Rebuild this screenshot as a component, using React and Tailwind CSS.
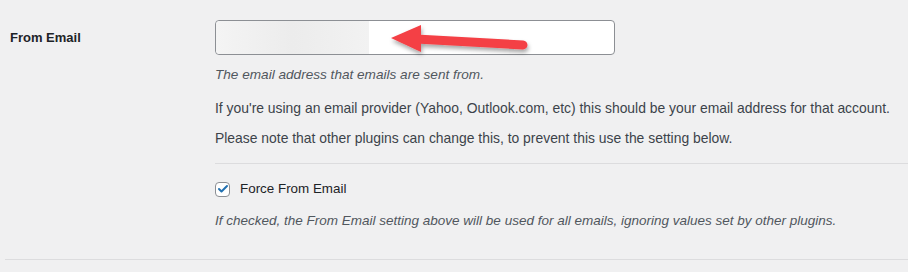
import { Check } from "lucide-react";

export default function App() {
  return (
    <div className="h-[272px] overflow-hidden bg-[#f0f0f1] font-['Liberation_Sans',Arial,sans-serif] text-[13px] text-[#3c434a]">
      <div className="flex pt-5">
        <div className="w-[215px] shrink-0 pl-[10px] pt-[8px] text-[13px] font-bold text-[#1d2327]">From Email</div>
        <div className="flex-1">
          <div className="relative h-[35px] w-[400px] overflow-visible rounded-[4px] border border-[#8c8f94] bg-white">
            <div className="absolute inset-y-0 left-0 w-[153px] rounded-l-[4px] bg-gradient-to-r from-[#f4f4f4] via-[#ececec] to-[#f2f2f2]" />
            <svg className="absolute left-[170px] top-[2px]" width="150" height="40" viewBox="0 0 150 40">
              <defs>
                <filter id="sh" x="-20%" y="-40%" width="140%" height="200%">
                  <feDropShadow dx="1" dy="3" stdDeviation="2" floodColor="#000" floodOpacity="0.35" />
                </filter>
              </defs>
              <g filter="url(#sh)">
                <line x1="30" y1="16" x2="137" y2="22" stroke="#f43f45" strokeWidth="9" strokeLinecap="round" />
                <polygon points="5,15 35,2 35,29" fill="#f43f45" />
              </g>
            </svg>
          </div>
          <p className="mt-[11px] text-[13.6px] italic leading-[18px] text-[#50575e]">The email address that emails are sent from.</p>
          <p className="mt-[15px] text-[13.9px] leading-[18px]">If you're using an email provider (Yahoo, Outlook.com, etc) this should be your email address for that account.</p>
          <p className="mt-[12px] text-[13.9px] leading-[18px]">Please note that other plugins can change this, to prevent this use the setting below.</p>
        </div>
      </div>
      <div className="ml-[215px] mt-[16px] h-px bg-[#dcdcde]" />
      <div className="ml-[215px] mt-[16px] flex items-center gap-[10px]">
        <span className="flex h-[15px] w-[15px] items-center justify-center rounded-[4px] border border-[#8c8f94] bg-white">
          <Check className="h-[12px] w-[12px] text-[#2271b1]" strokeWidth={4} />
        </span>
        <span className="text-[13.4px] leading-[18px] text-[#1d2327]">Force From Email</span>
      </div>
      <p className="ml-[215px] mt-[14px] text-[13.5px] italic leading-[18px] text-[#50575e]">If checked, the From Email setting above will be used for all emails, ignoring values set by other plugins.</p>
      <div className="ml-[5px] mt-[29px] h-px bg-[#dcdcde]" />
    </div>
  );
}
